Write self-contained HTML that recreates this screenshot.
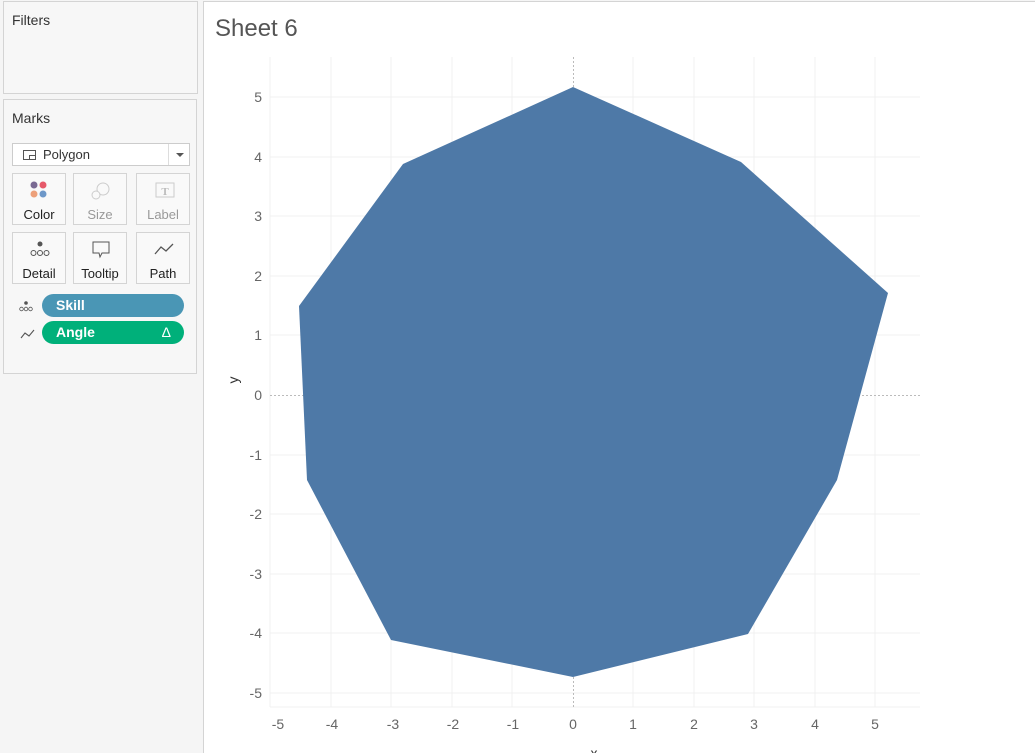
<!DOCTYPE html>
<html><head><meta charset="utf-8"><style>
*{box-sizing:border-box;margin:0;padding:0}
body{width:1035px;height:753px;overflow:hidden;background:#f5f5f5;font-family:"Liberation Sans",sans-serif;position:relative}
.panel{position:absolute;background:#f7f7f7;border:1px solid #d4d4d4}
.title{position:absolute;font-size:14px;color:#333}
.btn{position:absolute;width:54px;height:52px;border:1px solid #d4d4d4;background:#f9f9f9;font-size:13px;text-align:center}
.btn span{position:absolute;left:0;right:0;top:33px}
.btn svg{position:absolute;left:17px;top:7px}
.pill{position:absolute;left:38px;width:142px;height:23px;border-radius:12px;color:#fff;font-weight:bold;font-size:14px;padding:3px 0 0 14px}
</style></head><body>
<div class="panel" style="left:3px;top:1px;width:195px;height:93px"><div class="title" style="left:8px;top:10px">Filters</div></div>
<div class="panel" style="left:3px;top:99px;width:194px;height:275px">
 <div class="title" style="left:8px;top:10px">Marks</div>
 <div style="position:absolute;left:8px;top:43px;width:178px;height:23px;border:1px solid #ccc;background:#fff;font-size:13px;color:#333">
  <div style="position:absolute;left:10px;top:6px;width:13px;height:10px;border:1px solid #555"><div style="position:absolute;right:0;bottom:0;width:6px;height:4px;border-top:1px solid #555;border-left:1px solid #555"></div></div>
  <span style="position:absolute;left:30px;top:3px">Polygon</span>
  <div style="position:absolute;left:155px;top:0;height:21px;border-left:1px solid #ddd;width:22px"><div style="position:absolute;left:7px;top:9px;border:4px solid transparent;border-top:4px solid #555;border-bottom:0"></div></div>
 </div>
 <div class="btn" style="left:8px;top:73px"><svg width="20" height="20"><circle cx="4" cy="4" r="3.5" fill="#7a6a93"/><circle cx="13" cy="4" r="3.5" fill="#e6596a"/><circle cx="4" cy="13" r="3.5" fill="#eda07a"/><circle cx="13" cy="13" r="3.5" fill="#6e98c9"/></svg><span style="color:#222">Color</span></div>
 <div class="btn" style="left:69px;top:73px"><svg width="20" height="20"><circle cx="12" cy="8" r="6" fill="none" stroke="#ccc"/><circle cx="5" cy="14" r="4" fill="#f9f9f9" stroke="#ccc"/></svg><span style="color:#999">Size</span></div>
 <div class="btn" style="left:132px;top:73px"><svg width="22" height="20"><rect x="2" y="2" width="18" height="14" fill="none" stroke="#ccc"/><text x="11" y="14" font-size="11" text-anchor="middle" fill="#bbb" font-family="Liberation Serif" font-weight="bold">T</text></svg><span style="color:#999">Label</span></div>
 <div class="btn" style="left:8px;top:132px"><svg width="22" height="20"><circle cx="10" cy="4" r="2.5" fill="#555"/><circle cx="3.5" cy="13" r="2.5" fill="none" stroke="#555"/><circle cx="10" cy="13" r="2.5" fill="none" stroke="#555"/><circle cx="16.5" cy="13" r="2.5" fill="none" stroke="#555"/></svg><span style="color:#222">Detail</span></div>
 <div class="btn" style="left:69px;top:132px"><svg width="22" height="20"><path d="M2 2H18V13H11L9 17L8 13H2Z" fill="none" stroke="#555"/></svg><span style="color:#222">Tooltip</span></div>
 <div class="btn" style="left:132px;top:132px"><svg width="22" height="20"><path d="M1 14L7 7L12 11L19 4" fill="none" stroke="#555" stroke-width="1.3"/></svg><span style="color:#222">Path</span></div>
 <svg style="position:absolute;left:15px;top:200px" width="16" height="14"><circle cx="7" cy="3" r="1.8" fill="#555"/><circle cx="2.5" cy="9" r="1.8" fill="none" stroke="#555" stroke-width=".8"/><circle cx="7" cy="9" r="1.8" fill="none" stroke="#555" stroke-width=".8"/><circle cx="11.5" cy="9" r="1.8" fill="none" stroke="#555" stroke-width=".8"/></svg>
 <svg style="position:absolute;left:16px;top:228px" width="16" height="12"><path d="M1 10L5 5L9 8L14 2" fill="none" stroke="#555" stroke-width="1.1"/></svg>
 <div class="pill" style="top:194px;background:#4a96b5">Skill</div>
 <div class="pill" style="top:221px;background:#00b07a">Angle<span style="position:absolute;right:13px;top:3px;font-weight:normal">Δ</span></div>
</div>
<div style="position:absolute;left:203px;top:1px;width:832px;height:752px;background:#fff;border-top:1px solid #d4d4d4;border-left:1px solid #d4d4d4"></div>
<div style="position:absolute;left:215px;top:15px;font-size:24px;color:#555;font-weight:300">Sheet 6</div>
<svg style="position:absolute;left:0;top:0" width="1035" height="753" font-family="Liberation Sans" font-size="14" fill="#666">
<g stroke="#f0f0f0" stroke-width="1">
<line x1="270" y1="57" x2="270" y2="707"/><line x1="331" y1="57" x2="331" y2="707"/><line x1="391" y1="57" x2="391" y2="707"/><line x1="452" y1="57" x2="452" y2="707"/><line x1="512" y1="57" x2="512" y2="707"/><line x1="633" y1="57" x2="633" y2="707"/><line x1="694" y1="57" x2="694" y2="707"/><line x1="754" y1="57" x2="754" y2="707"/><line x1="815" y1="57" x2="815" y2="707"/><line x1="875" y1="57" x2="875" y2="707"/>
<line x1="270" y1="97" x2="920" y2="97"/><line x1="270" y1="157" x2="920" y2="157"/><line x1="270" y1="216" x2="920" y2="216"/><line x1="270" y1="276" x2="920" y2="276"/><line x1="270" y1="335" x2="920" y2="335"/><line x1="270" y1="455" x2="920" y2="455"/><line x1="270" y1="514" x2="920" y2="514"/><line x1="270" y1="574" x2="920" y2="574"/><line x1="270" y1="633" x2="920" y2="633"/><line x1="270" y1="693" x2="920" y2="693"/>
<line x1="270" y1="707" x2="920" y2="707"/>
</g>
<g stroke="#bbb" stroke-dasharray="2,2"><line x1="573.5" y1="57" x2="573.5" y2="707"/><line x1="270" y1="395.5" x2="920" y2="395.5"/></g>
<polygon points="573,87 741,162 888,293 837,480 748,634 573,677 391,640 307,480 299,306 403,164" fill="#4e79a7"/>
<g text-anchor="end"><text x="262" y="102">5</text><text x="262" y="162">4</text><text x="262" y="221">3</text><text x="262" y="281">2</text><text x="262" y="340">1</text><text x="262" y="400">0</text><text x="262" y="460">-1</text><text x="262" y="519">-2</text><text x="262" y="579">-3</text><text x="262" y="638">-4</text><text x="262" y="698">-5</text></g>
<g text-anchor="middle"><text x="278" y="729">-5</text><text x="332" y="729">-4</text><text x="393" y="729">-3</text><text x="453" y="729">-2</text><text x="513" y="729">-1</text><text x="573" y="729">0</text><text x="633" y="729">1</text><text x="694" y="729">2</text><text x="754" y="729">3</text><text x="815" y="729">4</text><text x="875" y="729">5</text></g>
<text x="0" y="0" transform="translate(238,380) rotate(-90)" text-anchor="middle" fill="#333">y</text>
<text x="594" y="758" text-anchor="middle" fill="#333">x</text>
</svg>
</body></html>
